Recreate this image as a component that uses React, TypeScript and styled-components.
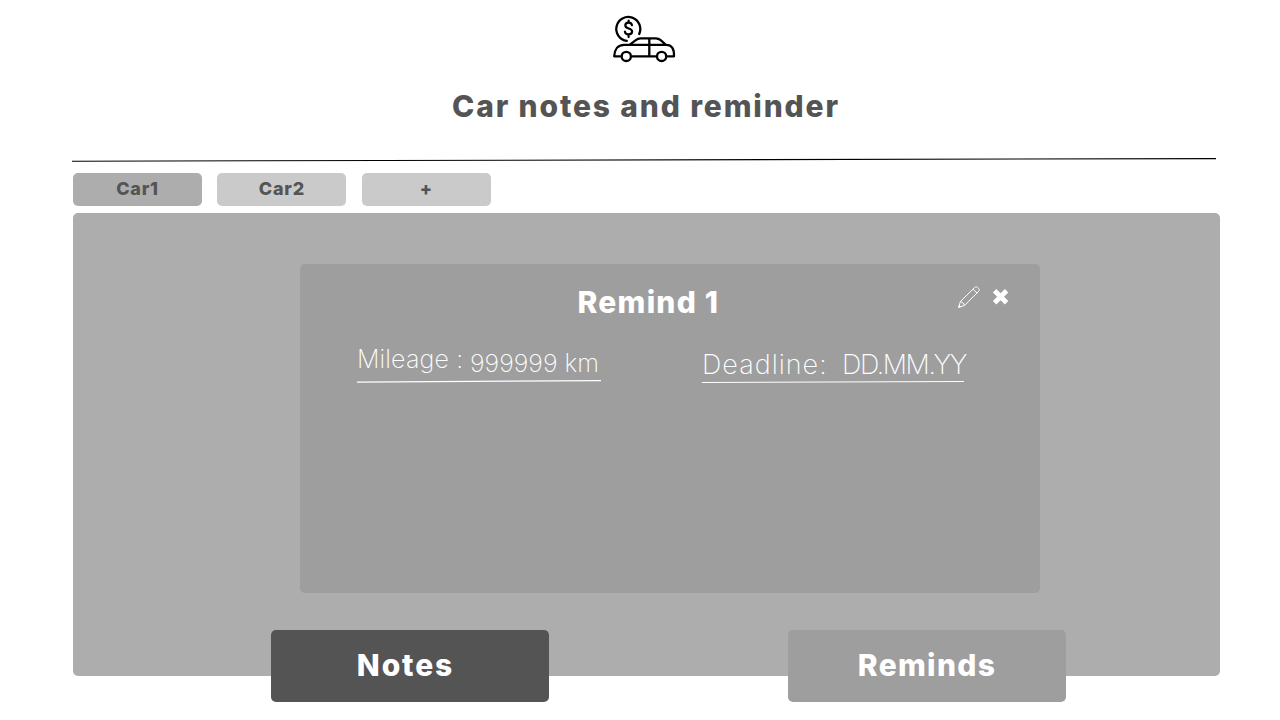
import React from "react";
import styled, { createGlobalStyle } from "styled-components";

const GlobalStyle = createGlobalStyle`
  * { box-sizing: border-box; }
  body { margin: 0; background: #fff; font-family: Inter, "Open Sans", sans-serif; }
  button { font: inherit; border: 0; padding: 0; cursor: pointer; }
`;

const Page = styled.main`
  width: 1280px;
  height: 720px;
  overflow: hidden;
  padding: 0 60px 0 72px;
  display: flex;
  flex-direction: column;
`;

const Header = styled.header`
  height: 157px;
  padding: 14px 0 0;
  display: flex;
  flex-direction: column;
  align-items: center;
`;

const Logo = styled.svg`
  display: block;
  width: 64px;
  height: 50px;
  margin-right: 4px;
`;

const Title = styled.h1`
  margin: 22px 0 0;
  font-size: 30px;
  line-height: 40px;
  font-weight: 800;
  letter-spacing: 1.86px;
  white-space: nowrap;
  color: #545454;
`;

const Divider = styled.svg`
  display: block;
  width: 1144px;
  height: 5px;
`;

const Tabs = styled.nav`
  display: flex;
  gap: 15.4px;
  padding: 11px 0 0 1px;
`;

const Tab = styled.button<{ $active?: boolean }>`
  width: 129px;
  height: 33px;
  border-radius: 5px;
  background: ${(p) => (p.$active ? "#adadad" : "#cacaca")};
  color: #545454;
  font-size: 18px;
  line-height: 31px;
  font-weight: 800;
  letter-spacing: 0.8px;
  padding-bottom: 2px;
`;

const Panel = styled.section`
  width: 1147px;
  height: 463px;
  margin: 7px 0 0 1px;
  padding: 51px 0 0 227px;
  border-radius: 5px;
  background: #adadad;
`;

const Card = styled.article`
  width: 740px;
  height: 329px;
  border-radius: 5px;
  background: #9e9e9e;
  color: #fff;
`;

const CardHeader = styled.div`
  height: 79px;
  padding: 18px 31px 0 277.5px;
  display: flex;
  justify-content: space-between;
`;

const CardTitle = styled.h2`
  margin: 0;
  font-size: 30px;
  line-height: 40px;
  font-weight: 800;
  letter-spacing: 1.25px;
  white-space: nowrap;
`;

const Actions = styled.div`
  display: flex;
  gap: 11px;
  padding-top: 3px;
`;

const IconButton = styled.button`
  display: block;
  height: 24px;
  background: none;
  color: #fff;
  svg { display: block; }
`;

const Fields = styled.div`
  display: flex;
  gap: 101px;
  padding-left: 57px;
`;

const Field = styled.div<{ $width: number }>`
  width: ${(p) => p.$width}px;
`;

const FieldText = styled.div<{ $gap: number }>`
  height: 36px;
  display: flex;
  align-items: flex-start;
  gap: ${(p) => p.$gap}px;
`;

const Text = styled.span<{ $size: number; $top: number; $spacing: number; $width: number }>`
  flex: none;
  width: ${(p) => p.$width}px;
  margin-top: ${(p) => p.$top}px;
  font-size: ${(p) => p.$size}px;
  line-height: 30px;
  font-weight: 200;
  letter-spacing: ${(p) => p.$spacing}px;
  white-space: pre;
`;

const Underline = styled.svg`
  display: block;
  width: 100%;
  height: 5px;
`;

const Switcher = styled.nav`
  position: relative;
  display: flex;
  gap: 239px;
  margin: -46px 0 0 199px;
`;

const ModeButton = styled.button<{ $dark?: boolean; $shift: number; $spacing: number }>`
  width: 278px;
  height: 72px;
  padding: 0 ${(p) => p.$shift}px 2px 0;
  border-radius: 5px;
  background: ${(p) => (p.$dark ? "#545454" : "#9e9e9e")};
  color: #fff;
  font-size: 30px;
  line-height: 70px;
  font-weight: 800;
  letter-spacing: ${(p) => p.$spacing}px;
`;

function CarLogo() {
  return (
    <Logo viewBox="0 0 64 50" fill="none" stroke="#000" strokeWidth="2.3" strokeLinecap="round" strokeLinejoin="round" aria-label="Car costs">
      <path d="M14.8 26.9A12 12 0 1 1 27.2 20" />
      <path d="M20 11.2c-.4-1.7-1.6-2.5-3.3-2.5-2 0-3.4 1-3.4 2.8 0 4 6.8 2 6.8 6 0 1.8-1.5 2.9-3.6 2.9-2 0-3.3-1-3.6-2.8M16.6 6.7v2M16.6 20.7v2.4" strokeWidth="2.2" />
      <path d="M8.5 42.3H2.2c.2-6.5 3.4-11.5 10-11.5h42c5.5 0 8 4 7.8 11.5h-6.5M20 42.3h24.3M17.5 30.8l6-4.5c1.8-1.4 3-1.9 5-1.9h15.2c2.2 0 3.5.5 5 1.8l5.2 4.6M37.3 24.4v17.9" />
      <circle cx="14.3" cy="42.4" r="4.6" />
      <circle cx="49.6" cy="42.4" r="4.6" />
    </Logo>
  );
}

function PencilIcon() {
  return (
    <svg width="24" height="24" viewBox="0 0 24 24" fill="none" stroke="#fff" strokeWidth="1" strokeLinejoin="round">
      <path d="M1.7 22.3l1.7-5.7L17.6 2.5c1-1 2.1-1 3 0l1.1 1.1c.8.9.8 1.9-.1 2.8L7.4 20.5zM3.4 16.6c2 .4 3.5 1.9 4 3.9M16 4.1l4 4" />
      <path d="M1.7 22.3l.6-2 1.4 1.4z" fill="#fff" />
    </svg>
  );
}

function CloseIcon() {
  return (
    <svg width="17" height="24" viewBox="0 0 17 24" fill="none" stroke="#fff" strokeWidth="4.8">
      <path d="M2.6 5.8l12 12M14.6 5.8l-12 12" />
    </svg>
  );
}

export default function App() {
  return (
    <>
      <GlobalStyle />
      <Page>
        <Header>
          <CarLogo />
          <Title>Car notes and reminder</Title>
        </Header>
        <Divider viewBox="0 0 1144 5">
          <path d="M0 4.2L1144 1.6" stroke="#000" strokeWidth="1.1" />
        </Divider>
        <Tabs>
          <Tab $active>Car1</Tab>
          <Tab>Car2</Tab>
          <Tab>+</Tab>
        </Tabs>
        <Panel>
          <Card>
            <CardHeader>
              <CardTitle>Remind 1</CardTitle>
              <Actions>
                <IconButton aria-label="Edit"><PencilIcon /></IconButton>
                <IconButton aria-label="Close"><CloseIcon /></IconButton>
              </Actions>
            </CardHeader>
            <Fields>
              <Field $width={244}>
                <FieldText $gap={6}>
                  <Text $size={25} $top={1} $spacing={0.15} $width={107}>Mileage :</Text>
                  <Text $size={25} $top={5} $spacing={0} $width={130}>999999 km</Text>
                </FieldText>
                <Underline viewBox="0 0 244 5"><path d="M0 3.2L244 1.6" stroke="#fff" strokeWidth="1.2" /></Underline>
              </Field>
              <Field $width={262}>
                <FieldText $gap={13}>
                  <Text $size={27} $top={7} $spacing={1} $width={127}>Deadline:</Text>
                  <Text $size={27} $top={7} $spacing={-1.4} $width={126}>DD.MM.YY</Text>
                </FieldText>
                <Underline viewBox="0 0 262 5"><path d="M0 3.5L262 2.5" stroke="#fff" strokeWidth="1.2" /></Underline>
              </Field>
            </Fields>
          </Card>
        </Panel>
        <Switcher>
          <ModeButton $dark $shift={9} $spacing={1.9}>Notes</ModeButton>
          <ModeButton $shift={0} $spacing={1.3}>Reminds</ModeButton>
        </Switcher>
      </Page>
    </>
  );
}
